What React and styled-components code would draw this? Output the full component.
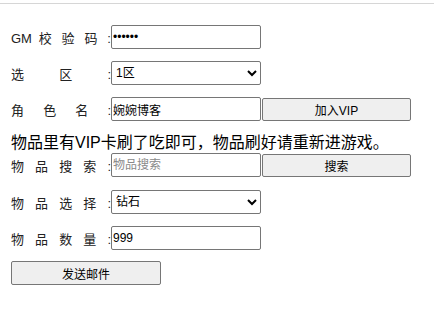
import React from "react";
import styled, { createGlobalStyle } from "styled-components";

const Global = createGlobalStyle`
  html, body { margin: 0; padding: 0; background: #fff; }
  body { font-family: "Liberation Sans", "Noto Sans CJK SC", sans-serif; color: #000; }
`;

const TopRule = styled.div`
  height: 3px;
  border-bottom: 1px solid #d6d6d6;
`;

const Page = styled.div`
  padding: 21px 0 0 11px;
`;

const Row = styled.div`
  display: flex;
  align-items: center;
  height: 24px;
  margin-bottom: ${(p) => p.$gap ?? 12}px;
`;

const Label = styled.label`
  display: inline-block;
  width: 100px;
  font-size: 13px;
  color: #222;
  text-align: justify;
  text-align-last: justify;
  white-space: nowrap;
  font-family: "Liberation Sans", "Noto Sans CJK SC", sans-serif;
`;

const TextInput = styled.input`
  box-sizing: border-box;
  width: 150px;
  height: 24px;
  margin: 0;
  padding: 1px 1px;
  border: 1px solid #767676;
  border-radius: 2px;
  font-size: 12px;
  font-family: "Liberation Sans", "Noto Sans CJK SC", sans-serif;
  color: #000;
  background: #fff;
  outline: none;
  &::placeholder { color: #8a8a8a; }
`;

const Select = styled.select`
  box-sizing: border-box;
  width: 150px;
  height: 24px;
  margin: 0;
  border: 1px solid #767676;
  border-radius: 2px;
  font-size: 12px;
  font-family: "Liberation Sans", "Noto Sans CJK SC", sans-serif;
  color: #000;
  background: #fff;
`;

const Button = styled.button`
  box-sizing: border-box;
  width: ${(p) => p.$w ?? 150}px;
  height: ${(p) => p.$h ?? 23}px;
  margin: 0 0 0 ${(p) => p.$ml ?? 0}px;
  padding: 0;
  border: 1px solid #767676;
  border-radius: 2px;
  background: #efefef;
  font-size: 12px;
  font-family: "Liberation Sans", "Noto Sans CJK SC", sans-serif;
  color: #000;
`;

const Notice = styled.div`
  font-size: 16px;
  line-height: 20px;
  font-family: "Liberation Sans", "Noto Sans CJK SC", sans-serif;
  color: #000;
  margin-bottom: 0;
  white-space: nowrap;
`;

export default function App() {
  return (
    <>
      <Global />
      <TopRule />
      <Page>
        <Row>
          <Label>GM 校 验 码 :</Label>
          <TextInput type="password" defaultValue="123456" />
        </Row>
        <Row>
          <Label>选 区 :</Label>
          <Select defaultValue="1">
            <option value="1">1区</option>
            <option value="2">2区</option>
          </Select>
        </Row>
        <Row>
          <Label>角 色 名 :</Label>
          <TextInput type="text" defaultValue="婉婉博客" />
          <Button $ml={1} $w={149}>加入VIP</Button>
        </Row>
        <Notice>物品里有VIP卡刷了吃即可，物品刷好请重新进游戏。</Notice>
        <Row $gap={13}>
          <Label>物 品 搜 索 :</Label>
          <TextInput type="text" placeholder="物品搜索" />
          <Button $ml={1} $w={149}>搜索</Button>
        </Row>
        <Row>
          <Label>物 品 选 择 :</Label>
          <Select defaultValue="zs">
            <option value="zs">钻石</option>
            <option value="jb">金币</option>
          </Select>
        </Row>
        <Row $gap={11}>
          <Label>物 品 数 量 :</Label>
          <TextInput type="text" defaultValue="999" />
        </Row>
        <Button $w={150} $h={24}>发送邮件</Button>
      </Page>
    </>
  );
}
